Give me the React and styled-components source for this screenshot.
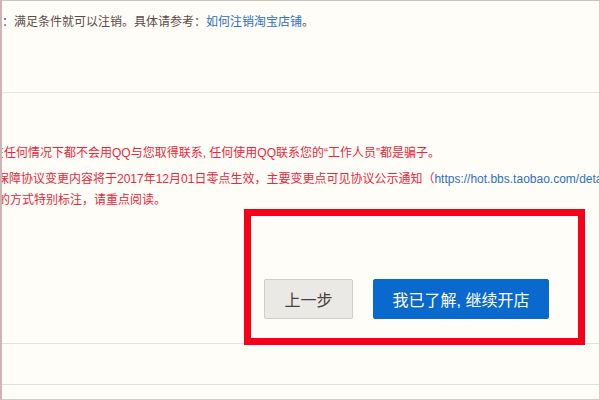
import styled, { createGlobalStyle } from "styled-components";

const Global = createGlobalStyle`
  html, body { margin: 0; padding: 0; background: #fffdf7; }
  body {
    font-family: "Liberation Sans", "Noto Sans CJK SC", sans-serif;
    font-size: 12px;
  }
`;

const Page = styled.div`
  position: relative;
  width: 600px;
  height: 400px;
  box-sizing: border-box;
  overflow: hidden;
  background: #fffdf7;
  border-left: 2px solid #cbb6b5;
  border-top: 1px solid #cdc2bf;
  border-right: 1px solid #d6ceca;
  border-bottom: 1px solid #d3cbc8;
`;

const Notice = styled.div`
  height: 92px;
  box-sizing: border-box;
  padding-top: 11px;
  border-bottom: 1px solid #e8e3dd;
  line-height: 20px;
  color: #5c4c48;
  white-space: nowrap;
`;

const Link = styled.a`
  color: #2f6fc4;
  text-decoration: none;
`;

const Warning = styled.div`
  height: 251px;
  box-sizing: border-box;
  padding-top: 50px;
  border-bottom: 1px solid #e6dfdb;
`;

const Paragraph = styled.p`
  margin: ${(p) => p.$top || 0}px 0 0;
  color: #e8283a;
  line-height: ${(p) => p.$lh || 20}px;
  white-space: nowrap;
`;

const Line = styled.span`
  display: block;
  margin-left: ${(p) => p.$shift}px;
`;

const Actions = styled.div`
  display: flex;
  gap: 20px;
  margin-top: 68px;
  padding-left: 262px;
`;

const Button = styled.button`
  height: 40px;
  box-sizing: border-box;
  padding: 0;
  border-radius: 2px;
  font-family: "Liberation Sans", "Noto Sans CJK SC", sans-serif;
  font-size: 16px;
  cursor: pointer;
  width: ${(p) => p.$w}px;
  background: ${(p) => (p.$primary ? "#0a69cc" : "#eae9e5")};
  color: ${(p) => (p.$primary ? "#ffffff" : "#4a3f3c")};
  border: 1px solid ${(p) => (p.$primary ? "#0a69cc" : "#d0ccc8")};
`;

const Footer = styled.div`
  height: 41px;
  box-sizing: border-box;
  border-bottom: 1px solid #e6dedb;
`;

const Highlight = styled.div`
  position: absolute;
  left: 242px;
  top: 208px;
  width: 341px;
  height: 136px;
  box-sizing: border-box;
  border: 7px solid #f70018;
  pointer-events: none;
`;

export default function App() {
  return (
    <>
      <Global />
      <Page>
        <Notice>
          ：满足条件就可以注销。具体请参考：<Link href="#">如何注销淘宝店铺</Link>。
        </Notice>
        <Warning>
          <Paragraph>
            <Line $shift={-10}>
              在任何情况下都不会用QQ与您取得联系, 任何使用QQ联系您的“工作人员”都是骗子。
            </Line>
          </Paragraph>
          <Paragraph $top={6} $lh={21}>
            <Line $shift={-5}>
              保障协议变更内容将于2017年12月01日零点生效，主要变更点可见协议公示通知（
              <Link href="#">https://hot.bbs.taobao.com/detail</Link>
            </Line>
            <Line $shift={-4}>的方式特别标注，请重点阅读。</Line>
          </Paragraph>
          <Actions>
            <Button $w={89}>上一步</Button>
            <Button $w={176} $primary>
              我已了解, 继续开店
            </Button>
          </Actions>
        </Warning>
        <Footer />
        <Highlight />
      </Page>
    </>
  );
}
